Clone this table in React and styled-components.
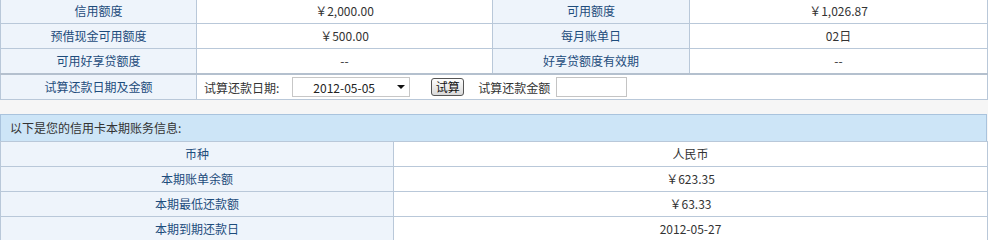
import React from 'react';
import styled, { createGlobalStyle } from 'styled-components';

const GlobalStyle = createGlobalStyle`
  body {
    margin: 0;
    background: #f6f6f6;
    font-family: "Noto Sans CJK SC", "Liberation Sans", sans-serif;
    font-size: 12px;
    color: #333;
  }
`;

const Page = styled.div`
  width: 988px;
  height: 240px;
  overflow: hidden;
`;

const Table = styled.table`
  width: 987px;
  border-collapse: collapse;
  table-layout: fixed;
  background: #fff;
  margin-top: ${(p) => p.$top || 0}px;
`;

const Cell = styled.td`
  height: 24px;
  padding: 0;
  border: 1px solid #b9c8d9;
  text-align: center;
  vertical-align: middle;
  line-height: 24px;
  font-size: 12px;
  white-space: nowrap;
  ${(p) =>
    p.$label
      ? `background: #eef4fb; color: #1d4c7c;`
      : `background: #fff; color: #333;`}
`;

const TrialRow = styled.tr`
  td {
    border-top: 2px solid #b4c0ce;
  }
`;

const TrialCell = styled.td`
  height: 24px;
  padding: 0 0 0 7px;
  border: 1px solid #b9c8d9;
  background: #fff;
`;

const TrialForm = styled.div`
  display: flex;
  align-items: center;
  height: 24px;
  color: #333;
  font-size: 12px;
`;

const FieldLabel = styled.span`
  margin-right: ${(p) => p.$gap || 0}px;
`;

const SelectWrap = styled.div`
  position: relative;
  width: 118px;
  height: 20px;
  margin-right: 21px;
`;

const Select = styled.select`
  appearance: none;
  width: 118px;
  height: 20px;
  box-sizing: border-box;
  border: 1px solid #c7c7c7;
  background: #fff;
  padding: 0 0 0 20px;
  font-family: "Noto Sans CJK SC", "Liberation Sans", sans-serif;
  font-size: 12px;
  color: #222;
  outline: none;
`;

const Arrow = styled.svg`
  position: absolute;
  right: 5px;
  top: 8px;
  pointer-events: none;
`;

const CalcButton = styled.button`
  width: 33px;
  height: 18px;
  padding: 0;
  margin-right: 14px;
  border: 1px solid #555;
  border-radius: 3px;
  background: linear-gradient(#fefefe, #d9d9d9);
  font-family: "Noto Sans CJK SC", sans-serif;
  font-size: 12px;
  line-height: 16px;
  color: #111;
`;

const AmountInput = styled.input`
  width: 71px;
  height: 20px;
  box-sizing: border-box;
  border: 1px solid #c4c4c4;
  background: #fff;
  padding: 0 3px;
`;

const Header = styled.div`
  margin-top: 14px;
  width: 985px;
  height: 26px;
  line-height: 26px;
  padding-left: 0;
  border: 1px solid #a9c3dd;
  border-bottom: 0;
  background: #cde5f7;
  color: #333;
  font-size: 12px;
  text-indent: 9px;
`;

const summary = [
  ['信用额度', '￥2,000.00', '可用额度', '￥1,026.87'],
  ['预借现金可用额度', '￥500.00', '每月账单日', '02日'],
  ['可用好享贷额度', '--', '好享贷额度有效期', '--'],
];

const billing = [
  ['币种', '人民币'],
  ['本期账单余额', '￥623.35'],
  ['本期最低还款额', '￥63.33'],
  ['本期到期还款日', '2012-05-27'],
];

export default function App() {
  return (
    <Page>
      <GlobalStyle />
      <Table $top={-2}>
        <colgroup>
          <col style={{ width: 196 }} />
          <col style={{ width: 296 }} />
          <col style={{ width: 197 }} />
          <col style={{ width: 298 }} />
        </colgroup>
        <tbody>
          {summary.map((row) => (
            <tr key={row[0]}>
              <Cell $label>{row[0]}</Cell>
              <Cell>{row[1]}</Cell>
              <Cell $label>{row[2]}</Cell>
              <Cell>{row[3]}</Cell>
            </tr>
          ))}
          <TrialRow>
            <Cell $label>试算还款日期及金额</Cell>
            <TrialCell colSpan={3}>
              <TrialForm>
                <FieldLabel $gap={13}>试算还款日期:</FieldLabel>
                <SelectWrap>
                  <Select defaultValue="2012-05-05">
                    <option>2012-05-05</option>
                  </Select>
                  <Arrow width="8" height="4" viewBox="0 0 8 4">
                    <path d="M0 0H8L4 4Z" fill="#111" />
                  </Arrow>
                </SelectWrap>
                <CalcButton>试算</CalcButton>
                <FieldLabel $gap={6}>试算还款金额</FieldLabel>
                <AmountInput />
              </TrialForm>
            </TrialCell>
          </TrialRow>
        </tbody>
      </Table>

      <Header>以下是您的信用卡本期账务信息:</Header>
      <Table>
        <colgroup>
          <col style={{ width: 393 }} />
          <col style={{ width: 594 }} />
        </colgroup>
        <tbody>
          {billing.map((row) => (
            <tr key={row[0]}>
              <Cell $label>{row[0]}</Cell>
              <Cell>{row[1]}</Cell>
            </tr>
          ))}
        </tbody>
      </Table>
    </Page>
  );
}
